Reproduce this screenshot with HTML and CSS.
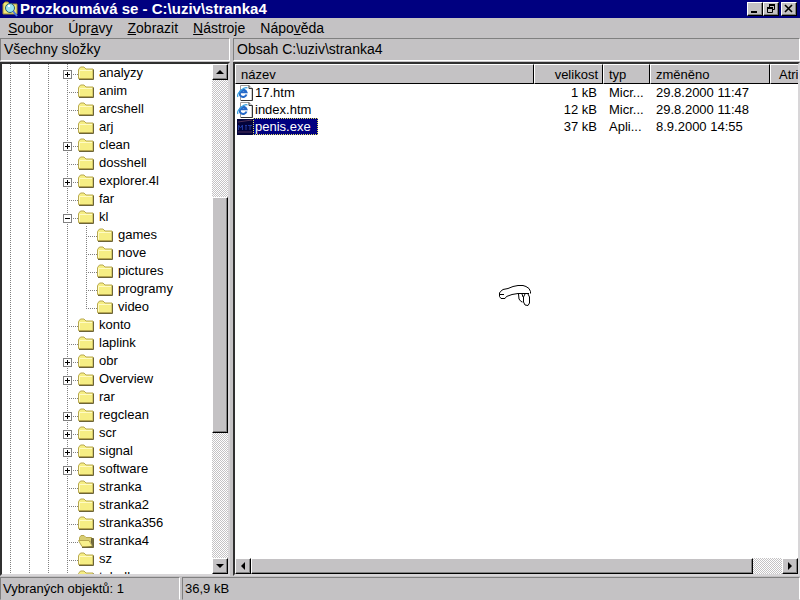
FILE: index.html
```
<!DOCTYPE html>
<html lang="cs">
<head>
<meta charset="utf-8">
<title>Prozkoumává se - C:\uziv\stranka4</title>
<link rel="stylesheet" href="styles.css">
</head>
<body>
<svg class="defs" aria-hidden="true">
  <symbol id="folder" viewBox="0 0 17 14">
    <path d="M0.5 12.5V3.5L2.5 1H6L8 3H15V12.5Z" fill="#f6ee84" stroke="#b8a850"/>
    <path d="M1.5 11.5V4.5H14" fill="none" stroke="#fffbc4"/>
    <path d="M1 13.5H15.500V3.5" fill="none" stroke="#6c6438"/>
  </symbol>
  <symbol id="folder-open" viewBox="0 0 17 14">
    <path d="M1.500 7V3.500L3 1.500H6L8 3.500H13.500V8Z" fill="#d8cd72" stroke="#b8a850"/>
    <path d="M0.500 6.500H11L14.500 12.500H4Z" fill="#f8f08c" stroke="#b8a850"/>
    <path d="M4 13.500H15.500V4.500H13.500V9L15 12" fill="#77703c" stroke="#6c6438"/>
  </symbol>
  <symbol id="html" viewBox="0 0 16 16">
    <path d="M3.500 0.500H12L15 3.500V15.500H3.500Z" fill="#fff" stroke="#9c9c9c"/>
    <path d="M12 0.500V3.500H15.500V15.500H4" fill="none" stroke="#333"/>
    <path d="M9.500 9.500A3.500 3.500 0 1 1 9.500 7.300H4" fill="none" stroke="#2468c8" stroke-width="2"/>
    <path d="M1 12C-1 9 7 1 10.500 3" fill="none" stroke="#38a0e0" stroke-width="1.300"/>
  </symbol>
</svg>
<div class="window">
  <header class="titlebar">
    <svg class="app-icon" viewBox="0 0 16 16" aria-hidden="true">
      <path d="M1 13V3L3 1H6L8 3H15V13Z" fill="#f1e778" stroke="#a09038"/>
      <circle cx="8" cy="7" r="4.500" fill="#9be4f0" stroke="#306070"/>
      <path d="M6 5H8" stroke="#fff" stroke-width="2"/>
      <path d="M11 10L15 15" stroke="#4878e0" stroke-width="2"/>
    </svg>
    <h1>Prozkoumává se - C:\uziv\stranka4</h1>
    <div class="controls">
      <button class="raised" aria-label="Minimalizovat"><svg viewBox="0 0 12 10"><path d="M2 8H8" stroke="#000" stroke-width="2"/></svg></button>
      <button class="raised" aria-label="Obnovit"><svg viewBox="0 0 12 10"><path d="M4 1H10M2 4H8" stroke="#000" stroke-width="2"/><path d="M4.500 3V1.500H9.500V5.500H8M2.500 4V8.500H7.500V4.500" fill="none" stroke="#000"/></svg></button>
      <button class="raised close" aria-label="Zavřít"><svg viewBox="0 0 12 10"><path d="M2 1L9 8M9 1L2 8" stroke="#000" stroke-width="1.600"/></svg></button>
    </div>
  </header>
  <nav class="menu">
    <button><u>S</u>oubor</button>
    <button>Úpr<u>a</u>vy</button>
    <button><u>Z</u>obrazit</button>
    <button><u>N</u>ástroje</button>
    <button>Nápo<u>v</u>ěda</button>
  </nav>
  <main class="split">
    <section class="side">
      <h2 class="caption">Všechny složky</h2>
      <div class="pane tree-pane">
        <ul class="tree">
          <li><div class="row"><span class="branch"><button class="toggle plus" aria-label="Rozbalit analyzy"></button></span><svg><use href="#folder"/></svg>analyzy</div></li>
          <li><div class="row"><span class="branch"></span><svg><use href="#folder"/></svg>anim</div></li>
          <li><div class="row"><span class="branch"></span><svg><use href="#folder"/></svg>arcshell</div></li>
          <li><div class="row"><span class="branch"></span><svg><use href="#folder"/></svg>arj</div></li>
          <li><div class="row"><span class="branch"><button class="toggle plus" aria-label="Rozbalit clean"></button></span><svg><use href="#folder"/></svg>clean</div></li>
          <li><div class="row"><span class="branch"></span><svg><use href="#folder"/></svg>dosshell</div></li>
          <li><div class="row"><span class="branch"><button class="toggle plus" aria-label="Rozbalit explorer.4l"></button></span><svg><use href="#folder"/></svg>explorer.4l</div></li>
          <li><div class="row"><span class="branch"></span><svg><use href="#folder"/></svg>far</div></li>
          <li><div class="row"><span class="branch"><button class="toggle" aria-label="Sbalit kl"></button></span><svg><use href="#folder"/></svg>kl</div>
            <ul class="subtree">
              <li><div class="row"><span class="branch"></span><svg><use href="#folder"/></svg>games</div></li>
              <li><div class="row"><span class="branch"></span><svg><use href="#folder"/></svg>nove</div></li>
              <li><div class="row"><span class="branch"></span><svg><use href="#folder"/></svg>pictures</div></li>
              <li><div class="row"><span class="branch"></span><svg><use href="#folder"/></svg>programy</div></li>
              <li><div class="row"><span class="branch"></span><svg><use href="#folder"/></svg>video</div></li>
            </ul>
          </li>
          <li><div class="row"><span class="branch"></span><svg><use href="#folder"/></svg>konto</div></li>
          <li><div class="row"><span class="branch"></span><svg><use href="#folder"/></svg>laplink</div></li>
          <li><div class="row"><span class="branch"><button class="toggle plus" aria-label="Rozbalit obr"></button></span><svg><use href="#folder"/></svg>obr</div></li>
          <li><div class="row"><span class="branch"><button class="toggle plus" aria-label="Rozbalit Overview"></button></span><svg><use href="#folder"/></svg>Overview</div></li>
          <li><div class="row"><span class="branch"></span><svg><use href="#folder"/></svg>rar</div></li>
          <li><div class="row"><span class="branch"><button class="toggle plus" aria-label="Rozbalit regclean"></button></span><svg><use href="#folder"/></svg>regclean</div></li>
          <li><div class="row"><span class="branch"><button class="toggle plus" aria-label="Rozbalit scr"></button></span><svg><use href="#folder"/></svg>scr</div></li>
          <li><div class="row"><span class="branch"><button class="toggle plus" aria-label="Rozbalit signal"></button></span><svg><use href="#folder"/></svg>signal</div></li>
          <li><div class="row"><span class="branch"><button class="toggle plus" aria-label="Rozbalit software"></button></span><svg><use href="#folder"/></svg>software</div></li>
          <li><div class="row"><span class="branch"></span><svg><use href="#folder"/></svg>stranka</div></li>
          <li><div class="row"><span class="branch"></span><svg><use href="#folder"/></svg>stranka2</div></li>
          <li><div class="row"><span class="branch"></span><svg><use href="#folder"/></svg>stranka356</div></li>
          <li><div class="row"><span class="branch"></span><svg><use href="#folder-open"/></svg>stranka4</div></li>
          <li><div class="row"><span class="branch"></span><svg><use href="#folder"/></svg>sz</div></li>
          <li><div class="row"><span class="branch"><button class="toggle plus" aria-label="Rozbalit tabulky"></button></span><svg><use href="#folder"/></svg>tabulky</div></li>
        </ul>
        <div class="scroll vertical">
          <button class="raised arrow" aria-label="Nahoru"><svg viewBox="0 0 8 8"><path d="M0 6L4 2L8 6Z"/></svg></button>
          <div class="track before"></div>
          <div class="raised thumb"></div>
          <div class="track after"></div>
          <button class="raised arrow" aria-label="Dolů"><svg viewBox="0 0 8 8"><path d="M0 2H8L4 6Z"/></svg></button>
        </div>
      </div>
    </section>
    <section class="content">
      <h2 class="caption">Obsah C:\uziv\stranka4</h2>
      <div class="pane list-pane">
        <div class="files">
          <table>
            <colgroup><col class="c-name"><col class="c-size"><col class="c-type"><col class="c-date"><col></colgroup>
            <thead><tr><th>název</th><th class="num">velikost</th><th>typ</th><th>změněno</th><th class="attr">Atri</th></tr></thead>
            <tbody>
              <tr><td class="name"><div class="file"><svg><use href="#html"/></svg><span>17.htm</span></div></td><td class="num">1 kB</td><td>Micr...</td><td>29.8.2000 11:47</td><td></td></tr>
              <tr><td class="name"><div class="file"><svg><use href="#html"/></svg><span>index.htm</span></div></td><td class="num">12 kB</td><td>Micr...</td><td>29.8.2000 11:48</td><td></td></tr>
              <tr><td class="name"><div class="file"><svg viewBox="0 0 16 16"><path d="M0 0H16V16H0Z" fill="#04043c"/><path d="M1 3L15 1M1 13H15" stroke="#503058"/><path d="M1.500 11V6L3.500 9L5.500 6V11M8 6.500H10M9 6V11M11 6.500H15M13 6V11" fill="none" stroke="#2038a0"/></svg><span class="selected">penis.exe</span></div></td><td class="num">37 kB</td><td>Apli...</td><td>8.9.2000 14:55</td><td></td></tr>
            </tbody>
          </table>
          <svg class="doodle" viewBox="0 0 34 24" aria-hidden="true">
            <path d="M2.500 8.500L5 6.500L10 5.500L15 3.500L20 2.500H25L28 3.500L31 5.500L32.500 8.500V10.500M2.500 8.500L1.500 10V13.500L3 15.500H7L8.500 13.500L14 11.500L20 10.500H31M2 11.500H6M20.500 11L21 16L23 18.500L24.500 19M24 11L25 14M27 11L25.500 14V19L27 22L30 22.500L31.500 20V14L30 11" fill="none" stroke="#000"/>
          </svg>
        </div>
        <div class="scroll horizontal">
          <button class="raised arrow" aria-label="Doleva"><svg viewBox="0 0 8 8"><path d="M6 0V8L2 4Z"/></svg></button>
          <div class="raised thumb"></div>
          <div class="track after"></div>
          <button class="raised arrow" aria-label="Doprava"><svg viewBox="0 0 8 8"><path d="M2 0V8L6 4Z"/></svg></button>
        </div>
      </div>
    </section>
  </main>
  <footer class="status"><span class="count">Vybraných objektů: 1</span><span class="size">36,9 kB</span></footer>
</div>
</body>
</html>
```
FILE: styles.css
```
* { box-sizing: border-box; }
body { margin: 0; background: #c4c2c4; color: #000; font: 13px/16px "Liberation Sans", Arial, sans-serif; }
button { margin: 0; padding: 0; border: 0; background: none; font: inherit; color: inherit; }
h1, h2 { margin: 0; font-size: 14px; }
ul { margin: 0; padding: 0; list-style: none; }
.defs { position: absolute; width: 0; height: 0; }
.window { display: flex; flex-direction: column; height: 100vh; overflow: hidden; }

.raised { background: #c4c2c4; border: 1px solid; border-color: #fff #000 #000 #fff; box-shadow: inset -1px -1px #808080; }

.titlebar { display: flex; align-items: center; flex: none; height: 18px; padding: 0 3px 0 2px; gap: 2px; background: #000080; color: #fff; }
.titlebar h1 { flex: 1; font-size: 15px; font-weight: bold; white-space: nowrap; }
.app-icon { width: 16px; height: 16px; }
.controls { display: flex; }
.controls button { width: 16px; height: 14px; }
.controls svg { display: block; width: 12px; height: 10px; margin: 1px; }
.controls .close { margin-left: 2px; }

.menu { display: flex; flex: none; height: 20px; padding-left: 8px; gap: 15px; align-items: center; font-size: 14px; }

.split { display: flex; flex: 1; min-height: 0; gap: 3px; }
.side, .content { display: flex; flex-direction: column; min-width: 0; }
.side { flex: 0 0 230px; }
.content { flex: 1; }
.caption { flex: none; height: 23px; padding: 2px 3px; border: 1px solid; border-color: #808080 #fff #fff #808080; font-weight: normal; white-space: nowrap; }
.pane { display: flex; flex: 1; min-height: 0; margin-top: 1px; background: #fff; border: 2px solid; border-color: #303030 #d8d6d8 #d8d6d8 #303030; }
.list-pane { flex-direction: column; }

.tree {
  flex: 1; overflow: hidden;
  background:
    linear-gradient(#808080 50%, transparent 50%) 8px 0 / 1px 2px repeat-y,
    linear-gradient(#808080 50%, transparent 50%) 27px 0 / 1px 2px repeat-y,
    linear-gradient(#808080 50%, transparent 50%) 46px 0 / 1px 2px repeat-y,
    linear-gradient(#808080 50%, transparent 50%) 65px 0 / 1px 2px repeat-y;
}
.row { display: flex; align-items: center; height: 18px; padding-left: 57px; white-space: nowrap; }
.row svg { flex: none; width: 17px; height: 14px; margin-right: 4px; }
.branch { display: flex; align-items: center; flex: none; width: 19px; height: 18px; padding-left: 4px; background: linear-gradient(90deg, #808080 50%, transparent 50%) 8px 10px / 2px 1px repeat-x; background-clip: content-box; }
.branch:empty { padding-left: 8px; }
.toggle { width: 9px; height: 9px; margin-top: 3px; border: 1px solid #808080; background: linear-gradient(#000, #000) center / 5px 1px no-repeat, #fff; }
.toggle.plus { background: linear-gradient(#000, #000) center / 5px 1px no-repeat, linear-gradient(#000, #000) center / 1px 5px no-repeat, #fff; }
.subtree { position: relative; }
.subtree .row { padding-left: 76px; }
.subtree::before { content: ""; position: absolute; top: 0; bottom: 8px; left: 84px; width: 1px; background: linear-gradient(#808080 50%, transparent 50%) 0 0 / 1px 2px; }

.scroll { display: flex; flex: none; }
.vertical { flex-direction: column; width: 16px; }
.horizontal { height: 16px; }
.arrow { display: flex; align-items: center; justify-content: center; flex: none; width: 16px; height: 16px; }
.arrow svg { width: 8px; height: 8px; }
.track { background: repeating-conic-gradient(#c4c2c4 0 25%, #fff 0 50%) 0 0 / 2px 2px; }
.vertical .before { flex: 118; }
.vertical .thumb { flex: 235; }
.vertical .after { flex: 126; }
.horizontal .thumb { flex: 502; }
.horizontal .after { flex: 29; }

.files { position: relative; flex: 1; min-height: 0; overflow: hidden; }
table { width: 100%; table-layout: fixed; border-collapse: separate; border-spacing: 0; }
.c-name { width: 299px; }
.c-size { width: 69px; }
.c-type { width: 47px; }
.c-date { width: 120px; }
th, td { padding: 0 6px; text-align: left; font-weight: normal; white-space: nowrap; overflow: hidden; }
th { height: 20px; background: #c4c2c4; border: 1px solid; border-color: #fff #000 #000 #fff; padding: 1px 4px 0 5px; }
th.attr { padding: 1px 0 0 8px; border-right: 0; }
td { height: 17px; }
.num { text-align: right; }
td.name { padding: 0 0 0 2px; }
.file { display: flex; align-items: center; height: 17px; }
.file svg { flex: none; width: 16px; height: 16px; }
.file span { padding: 0 6px 0 1px; border: 1px solid transparent; line-height: 15px; }
.file .selected { background: #000080; color: #fff; border: 1px dotted #e0e060; }
.doodle { position: absolute; left: 263px; top: 219px; width: 34px; height: 24px; }

.status { display: flex; flex: none; height: 23px; margin-top: 1px; gap: 2px; }
.status span { padding: 3px 2px; border: 1px solid; border-color: #808080 #fff #c4c2c4 #808080; white-space: nowrap; }
.count { width: 180px; }
.size { flex: 1; }
```
